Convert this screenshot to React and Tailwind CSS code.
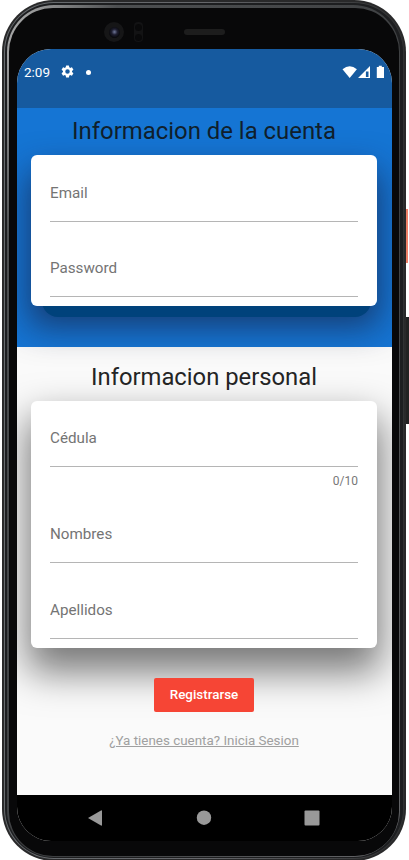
import React from "react";

function Field({ label, gap }) {
  return (
    <div className={"border-b border-[#b5b5b5] flex items-center h-[57px] pt-px text-[15.2px] text-[#747474] " + gap}>
      <span>{label}</span>
    </div>
  );
}

function Camera() {
  return (
    <div className="absolute left-[102px] top-[22px] flex items-center">
      <div className="w-5 h-5 rounded-full bg-[#161617] flex items-center justify-center">
        <div className="w-[11px] h-[11px] rounded-full bg-[radial-gradient(circle_at_50%_45%,#70789a_0%,#1e1e30_35%,#08080b_70%)]" />
      </div>
      <div className="ml-[10px] w-[9px] h-5 rounded bg-[#131314] flex flex-col items-center justify-around">
        <div className="w-[7px] h-[7px] rounded-full bg-[#09090a]" />
        <div className="w-[7px] h-[7px] rounded-full bg-[#09090a]" />
      </div>
      <div className="ml-[41px] w-[41px] h-[6px] rounded-full bg-[#1d1d1d]" />
    </div>
  );
}

function StatusBar() {
  return (
    <div className="h-[59px] shrink-0 bg-[#165a9f] flex items-start pt-[15px] pl-[7px] pr-[7px] text-white">
      <span className="w-[27px] text-[13.5px] leading-[17px]">2:09</span>
      <svg className="ml-[9px] w-[15px] h-[15px]" viewBox="0 0 24 24" fill="currentColor">
        <path d="M19.14 12.94c.04-.3.06-.61.06-.94 0-.32-.02-.64-.07-.94l2.03-1.58a.49.49 0 0 0 .12-.61l-1.92-3.32a.49.49 0 0 0-.59-.22l-2.39.96c-.5-.38-1.03-.7-1.62-.94l-.36-2.54a.48.48 0 0 0-.48-.41h-3.84a.48.48 0 0 0-.47.41l-.36 2.54c-.59.24-1.13.57-1.62.94l-2.39-.96a.48.48 0 0 0-.59.22L2.74 8.87a.48.48 0 0 0 .12.61l2.03 1.58c-.05.3-.09.63-.09.94s.02.64.07.94l-2.03 1.58a.49.49 0 0 0-.12.61l1.92 3.32c.12.22.37.29.59.22l2.39-.96c.5.38 1.03.7 1.62.94l.36 2.54c.05.24.24.41.48.41h3.84c.24 0 .44-.17.47-.41l.36-2.54c.59-.24 1.13-.56 1.62-.94l2.39.96c.22.08.47 0 .59-.22l1.92-3.32a.48.48 0 0 0-.12-.61zM12 15.6A3.6 3.6 0 1 1 12 8.4a3.6 3.6 0 0 1 0 7.2z" />
      </svg>
      <span className="ml-[11px] mt-[6px] w-[4.5px] h-[4.5px] rounded-full bg-white" />
      <svg className="ml-auto mt-[1px] w-[43px] h-[14px]" viewBox="0 0 43 14" fill="currentColor">
        <path d="M.5 4.2Q7.7-1.7 14.9 4.2L7.7 13z" />
        <path fillRule="evenodd" d="M16 13L28 1V13zM23.9 6.5V12H26.5V6.5z" />
        <path d="M34.8 2h2V.8h3V2h2.2v11h-7.2z" />
      </svg>
    </div>
  );
}

export default function App() {
  return (
    <div className="relative w-[409px] h-[860px] overflow-hidden bg-white font-[Roboto,sans-serif]">
      <div className="absolute left-[404px] top-[209px] w-[4px] h-[54px] bg-[#ef8068] border-l border-[#a94c39]" />
      <div className="absolute left-[404px] top-[317px] w-[5px] h-[107px] bg-[#222]" />
      <div className="relative ml-[2px] w-[404px] h-[861px] rounded-[52px] bg-[#29292a] p-[2px]">
        <div className="h-full rounded-[50px] bg-linear-to-r from-[#676b6e] via-[#66676b] to-[#303132] p-px">
          <div className="h-full rounded-[49px] bg-[#1d1e20] pl-[2px] pt-[2px] pr-[3px] pb-px">
            <div className="h-full rounded-[47px] bg-[linear-gradient(115deg,#b4b4b4_0%,#4d4f51_14%,#3c3e40_60%,#66676a_100%)] pl-[2px] pt-[3px] pr-px pb-px">
              <div className="h-full rounded-[44px] bg-[#080809]" />
            </div>
          </div>
        </div>
        <Camera />
        <main className="absolute left-[15px] top-[49px] w-[375px] h-[792px] rounded-[34px] overflow-hidden bg-[#fafafa] flex flex-col">
          <StatusBar />
          <section className="h-[239px] shrink-0 bg-[#1575d4] pl-[14px] pr-[15px] pt-[7px]">
            <h1 className="text-center text-[23.9px] leading-[32px] text-[#101f2c]">Informacion de la cuenta</h1>
            <div className="relative mt-[8px] h-[151px] rounded-[6px] shadow-[0_18px_34px_2px_rgba(24,30,60,0.68)]">
              <div className="absolute left-[11px] right-[6px] bottom-[-11px] h-[40px] rounded-[16px] bg-[#00427b]" />
              <div className="relative h-full rounded-[6px] bg-white px-[19px] pt-[10px]">
                <Field label="Email" gap="" />
                <Field label="Password" gap="mt-[18px]" />
              </div>
            </div>
          </section>
          <section className="relative h-[448px] shrink-0 pl-[14px] pr-[15px] pt-[14px]">
            <h2 className="text-center text-[23.8px] leading-[32px] text-[#242424]">Informacion personal</h2>
            <div className="mt-[8px] h-[247px] rounded-[6px] bg-white px-[19px] pt-[9px] shadow-[0_20px_38px_4px_rgba(0,0,0,0.52)]">
              <Field label="Cédula" gap="" />
              <div className="mt-[6px] h-[14px] text-right text-[12px] leading-[16px] text-[#777]">0/10</div>
              <Field label="Nombres" gap="mt-[19px]" />
              <Field label="Apellidos" gap="mt-[19px]" />
            </div>
            <button className="relative block mx-auto mt-[30px] w-[100px] h-[34px] rounded-[2px] bg-[#f64535] text-white text-[13.4px] font-medium">Registrarse</button>
            <a className="relative block mt-[20px] text-center text-[13.4px] leading-[18px] text-[#a0a0a0] underline">¿Ya tienes cuenta? Inicia Sesion</a>
          </section>
          <nav className="h-[46px] shrink-0 bg-black">
            <svg width="375" height="46" fill="#999">
              <path d="M71 23L84 15.5Q85 15 85 16V30Q85 31 84 30.5Z" />
              <circle cx="187" cy="22.7" r="7.2" />
              <rect x="287.5" y="15.5" width="15" height="15" rx="1" />
            </svg>
          </nav>
        </main>
      </div>
    </div>
  );
}
